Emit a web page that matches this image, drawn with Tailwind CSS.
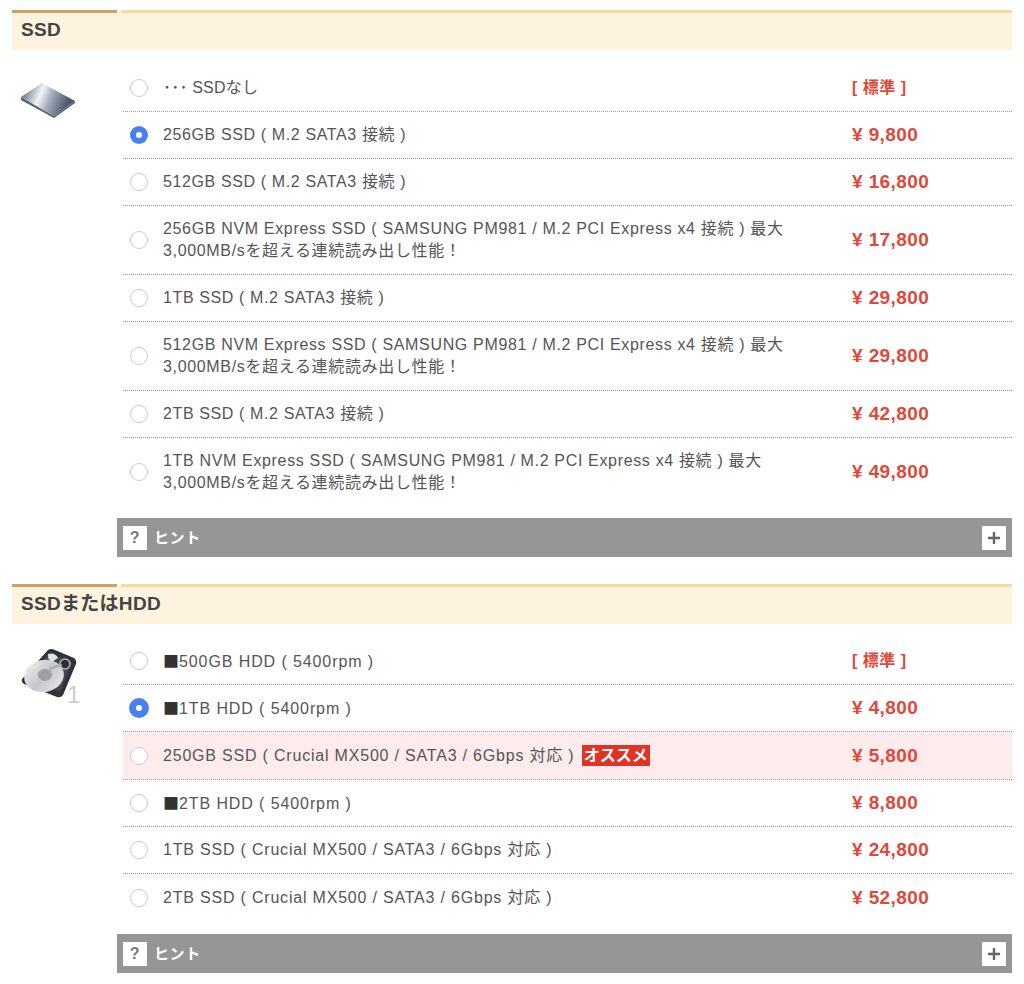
<!DOCTYPE html>
<html lang="ja">
<head>
<meta charset="UTF-8">
<title>SSD</title>
<script src="https://cdn.jsdelivr.net/npm/@tailwindcss/browser@4"></script>
</head>
<body class="bg-white font-['Liberation_Sans','Noto_Sans_CJK_JP',sans-serif] text-[#555] text-[16px] tracking-[0.62px] leading-[22px]">
<div class="w-[1000px] ml-3 pt-[10px]">

<!-- SSD -->
<section>
  <div class="flex gap-1 h-[3px]"><div class="w-[105px] bg-[#d0a060]"></div><div class="flex-1 bg-[#f5dc9c]"></div></div>
  <h2 class="bg-[#fdf3df] h-[37px] pl-[9px] text-[19px] tracking-[0.3px] leading-[34px] font-bold text-[#444]">SSD</h2>
  <div class="flex pt-[15px]">
    <div class="w-[111px] pl-2 pt-[15px]">
      <svg class="blur-[0.4px]" width="56" height="40" viewBox="0 0 56 40">
        <defs><linearGradient id="ssd" x1="0" y1="0" x2="1" y2="0.25"><stop offset="0.02" stop-color="#46566c"/><stop offset="0.42" stop-color="#f2f4f7"/><stop offset="0.6" stop-color="#aab4c0"/><stop offset="0.95" stop-color="#4a5a70"/></linearGradient></defs>
        <path d="M1 17 L34 36 L55 21 L55 23 L34 38 L1 20Z" fill="#59616d"/>
        <path d="M1 17 L22 3 L55 21 L34 36Z" fill="url(#ssd)"/>
      </svg>
    </div>
    <div class="w-[889px]">
      <label class="flex items-center h-[47px] border-b border-dotted border-[#999]">
        <span class="w-[18px] h-[18px] ml-[7px] rounded-full border border-[#ccc] bg-white shrink-0"></span>
        <span class="ml-[15px] w-[689px] tracking-[0.2px]">･･･ SSDなし</span>
        <span class="font-bold tracking-[0.5px] text-[#e0483a]">[ 標準 ]</span>
      </label>
      <label class="flex items-center h-[47px] border-b border-dotted border-[#999]">
        <span class="flex items-center justify-center w-[18px] h-[18px] ml-[7px] rounded-full bg-[#4a80ee] shrink-0"><span class="w-[6px] h-[6px] rounded-full bg-white"></span></span>
        <span class="ml-[15px] w-[689px]">256GB SSD ( M.2 SATA3 接続 )</span>
        <span class="text-[19px] tracking-[0.4px] font-bold text-[#e0483a]">¥ 9,800</span>
      </label>
      <label class="flex items-center h-[47px] border-b border-dotted border-[#999]">
        <span class="w-[18px] h-[18px] ml-[7px] rounded-full border border-[#ccc] bg-white shrink-0"></span>
        <span class="ml-[15px] w-[689px]">512GB SSD ( M.2 SATA3 接続 )</span>
        <span class="text-[19px] tracking-[0.4px] font-bold text-[#e0483a]">¥ 16,800</span>
      </label>
      <label class="flex items-center h-[69px] border-b border-dotted border-[#999]">
        <span class="w-[18px] h-[18px] ml-[7px] rounded-full border border-[#ccc] bg-white shrink-0"></span>
        <span class="ml-[15px] w-[689px] tracking-[0.66px]">256GB NVM Express SSD ( SAMSUNG PM981 / M.2 PCI Express x4 接続 ) 最大<br>3,000MB/sを超える連続読み出し性能！</span>
        <span class="text-[19px] tracking-[0.4px] font-bold text-[#e0483a]">¥ 17,800</span>
      </label>
      <label class="flex items-center h-[47px] border-b border-dotted border-[#999]">
        <span class="w-[18px] h-[18px] ml-[7px] rounded-full border border-[#ccc] bg-white shrink-0"></span>
        <span class="ml-[15px] w-[689px]">1TB SSD ( M.2 SATA3 接続 )</span>
        <span class="text-[19px] tracking-[0.4px] font-bold text-[#e0483a]">¥ 29,800</span>
      </label>
      <label class="flex items-center h-[69px] border-b border-dotted border-[#999]">
        <span class="w-[18px] h-[18px] ml-[7px] rounded-full border border-[#ccc] bg-white shrink-0"></span>
        <span class="ml-[15px] w-[689px] tracking-[0.66px]">512GB NVM Express SSD ( SAMSUNG PM981 / M.2 PCI Express x4 接続 ) 最大<br>3,000MB/sを超える連続読み出し性能！</span>
        <span class="text-[19px] tracking-[0.4px] font-bold text-[#e0483a]">¥ 29,800</span>
      </label>
      <label class="flex items-center h-[47px] border-b border-dotted border-[#999]">
        <span class="w-[18px] h-[18px] ml-[7px] rounded-full border border-[#ccc] bg-white shrink-0"></span>
        <span class="ml-[15px] w-[689px]">2TB SSD ( M.2 SATA3 接続 )</span>
        <span class="text-[19px] tracking-[0.4px] font-bold text-[#e0483a]">¥ 42,800</span>
      </label>
      <label class="flex items-center h-[67px]">
        <span class="w-[18px] h-[18px] ml-[7px] rounded-full border border-[#ccc] bg-white shrink-0"></span>
        <span class="ml-[15px] w-[689px] tracking-[0.66px]">1TB NVM Express SSD ( SAMSUNG PM981 / M.2 PCI Express x4 接続 ) 最大<br>3,000MB/sを超える連続読み出し性能！</span>
        <span class="text-[19px] tracking-[0.4px] font-bold text-[#e0483a]">¥ 49,800</span>
      </label>
    </div>
  </div>
  <div class="flex items-center justify-between ml-[105px] mt-[13px] h-[39px] bg-[#969696] px-[6px]">
    <div class="flex items-center gap-[7px] text-white font-bold text-[15px]"><span class="flex items-center justify-center w-6 h-6 bg-white text-[#777] text-[16px]">?</span>ヒント</div>
    <span class="flex items-center justify-center w-6 h-6 bg-white"><svg width="14" height="14" viewBox="0 0 14 14"><path d="M7 1V13M1 7H13" stroke="#666" stroke-width="2.4"/></svg></span>
  </div>
</section>

<!-- SSDまたはHDD -->
<section class="mt-[27px]">
  <div class="flex gap-1 h-[3px]"><div class="w-[105px] bg-[#d0a060]"></div><div class="flex-1 bg-[#f5dc9c]"></div></div>
  <h2 class="bg-[#fdf3df] h-[37px] pl-[9px] text-[19px] tracking-[0.3px] leading-[34px] font-bold text-[#444]">SSDまたはHDD</h2>
  <div class="flex pt-[14px]">
    <div class="relative w-[111px] pl-2 pt-[10px]">
      <svg class="blur-[0.4px]" width="58" height="52" viewBox="0 0 58 52">
        <defs><linearGradient id="platter" x1="0" y1="0" x2="1" y2="1"><stop offset="0" stop-color="#f4f5f6"/><stop offset="0.5" stop-color="#c4c7cb"/><stop offset="1" stop-color="#eceef0"/></linearGradient></defs>
        <path d="M2 31 L28 2 Q31 0 35 2 L54 10 Q57 12 56 16 L43 47 Q41 50 37 49 L4 36 Q1 34 2 31Z" fill="#2f3338"/>
        <path d="M5 31 L29 5 L52 14 L40 44Z" fill="#43474d"/>
        <ellipse cx="24" cy="28" rx="20" ry="16" transform="rotate(-12 24 28)" fill="url(#platter)"/>
        <ellipse cx="25" cy="27" rx="7" ry="6" fill="#9b9fa4"/>
        <path d="M28 6 Q35 4 38 10 L32 14 Q27 11 28 6Z" fill="#dfe2e5"/>
        <circle cx="45" cy="16" r="5" fill="#2a2d31" stroke="#b4b8bd" stroke-width="1.5"/>
        <path d="M42 17 L31 20 L29 25" fill="none" stroke="#a8acb1" stroke-width="2"/>
      </svg>
      <span class="absolute left-[55px] top-[45px] text-[24px] leading-[24px] tracking-normal text-[#ccc]">1</span>
    </div>
    <div class="w-[889px]">
      <label class="flex items-center h-[47px] border-b border-dotted border-[#999]">
        <span class="w-[18px] h-[18px] ml-[7px] rounded-full border border-[#ccc] bg-white shrink-0"></span>
        <span class="ml-[15px] w-[689px] tracking-[0.9px]"><span class="font-['Noto_Sans_CJK_JP'] text-[#333] tracking-normal">■</span>500GB HDD ( 5400rpm )</span>
        <span class="font-bold tracking-[0.5px] text-[#e0483a]">[ 標準 ]</span>
      </label>
      <label class="flex items-center h-[47px] border-b border-dotted border-[#999]">
        <span class="flex items-center justify-center w-[20px] h-[20px] ml-[6px] mr-[-1px] rounded-full bg-[#4a80ee] shrink-0"><span class="w-[6px] h-[6px] rounded-full bg-white"></span></span>
        <span class="ml-[15px] w-[689px] tracking-[0.9px]"><span class="font-['Noto_Sans_CJK_JP'] text-[#333] tracking-normal">■</span>1TB HDD ( 5400rpm )</span>
        <span class="text-[19px] tracking-[0.4px] font-bold text-[#e0483a]">¥ 4,800</span>
      </label>
      <label class="flex items-center h-[48px] border-b border-dotted border-[#999] bg-[#fdeceb]">
        <span class="w-[18px] h-[18px] ml-[7px] rounded-full border border-[#ccc] bg-white shrink-0"></span>
        <span class="ml-[15px] w-[689px] tracking-[0.8px]">250GB SSD ( Crucial MX500 / SATA3 / 6Gbps 対応 ) <span class="inline-block ml-[2px] bg-[#e03326] text-white font-bold text-[16px] tracking-normal leading-[21px] px-[2px]">オススメ</span></span>
        <span class="text-[19px] tracking-[0.4px] font-bold text-[#e0483a]">¥ 5,800</span>
      </label>
      <label class="flex items-center h-[47px] border-b border-dotted border-[#999]">
        <span class="w-[18px] h-[18px] ml-[7px] rounded-full border border-[#ccc] bg-white shrink-0"></span>
        <span class="ml-[15px] w-[689px] tracking-[0.9px]"><span class="font-['Noto_Sans_CJK_JP'] text-[#333] tracking-normal">■</span>2TB HDD ( 5400rpm )</span>
        <span class="text-[19px] tracking-[0.4px] font-bold text-[#e0483a]">¥ 8,800</span>
      </label>
      <label class="flex items-center h-[47px] border-b border-dotted border-[#999]">
        <span class="w-[18px] h-[18px] ml-[7px] rounded-full border border-[#ccc] bg-white shrink-0"></span>
        <span class="ml-[15px] w-[689px] tracking-[0.8px]">1TB SSD ( Crucial MX500 / SATA3 / 6Gbps 対応 )</span>
        <span class="text-[19px] tracking-[0.4px] font-bold text-[#e0483a]">¥ 24,800</span>
      </label>
      <label class="flex items-center h-[47px]">
        <span class="w-[18px] h-[18px] ml-[7px] rounded-full border border-[#ccc] bg-white shrink-0"></span>
        <span class="ml-[15px] w-[689px] tracking-[0.8px]">2TB SSD ( Crucial MX500 / SATA3 / 6Gbps 対応 )</span>
        <span class="text-[19px] tracking-[0.4px] font-bold text-[#e0483a]">¥ 52,800</span>
      </label>
    </div>
  </div>
  <div class="flex items-center justify-between ml-[105px] mt-[13px] h-[39px] bg-[#969696] px-[6px]">
    <div class="flex items-center gap-[7px] text-white font-bold text-[15px]"><span class="flex items-center justify-center w-6 h-6 bg-white text-[#777] text-[16px]">?</span>ヒント</div>
    <span class="flex items-center justify-center w-6 h-6 bg-white"><svg width="14" height="14" viewBox="0 0 14 14"><path d="M7 1V13M1 7H13" stroke="#666" stroke-width="2.4"/></svg></span>
  </div>
</section>

</div>
</body>
</html>
